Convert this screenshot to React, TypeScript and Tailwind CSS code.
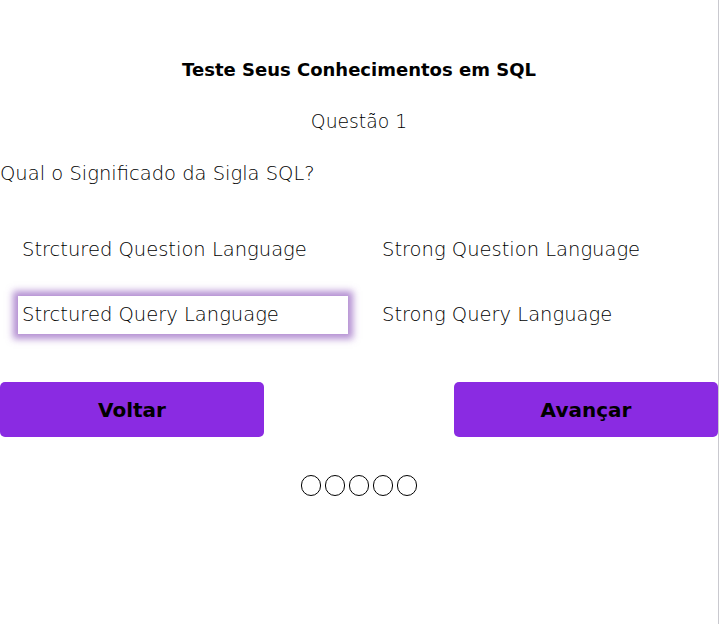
const options = [
  { label: "Strctured Question Language", selected: false },
  { label: "Strong Question Language", selected: false },
  { label: "Strctured Query Language", selected: true },
  { label: "Strong Query Language", selected: false },
];

export default function App() {
  return (
    <div className="flex w-[720px] h-[624px] bg-white text-black font-['DejaVu_Sans',sans-serif]">
      <main className="w-[718px] flex flex-col">
        <h1 className="pt-[56px] text-center text-[18px] leading-[27px] font-bold">
          Teste Seus Conhecimentos em SQL
        </h1>
        <p className="mt-[25px] text-center text-[18.8px] leading-[27px] font-extralight">Questão 1</p>
        <p className="mt-[25px] text-[19.5px] leading-[27px] font-extralight">Qual o Significado da Sigla SQL?</p>

        <div className="mt-[44px] ml-[18px] grid grid-cols-[330px_330px] gap-x-[30px] gap-y-[27px]">
          {options.map((o) => (
            <div
              key={o.label}
              className={
                o.selected
                  ? "h-[38px] flex items-center pl-[4px] bg-white shadow-[0_0_7px_5px_rgba(130,70,180,0.6)] text-[19.5px] font-extralight"
                  : "h-[38px] flex items-center pl-[4px] text-[19.5px] font-extralight"
              }
            >
              {o.label}
            </div>
          ))}
        </div>

        <div className="mt-[48px] flex justify-between">
          <button className="w-[264px] h-[55px] rounded-[5px] bg-[#8a2be2] text-[20px] font-bold">Voltar</button>
          <button className="w-[264px] h-[55px] rounded-[5px] bg-[#8a2be2] text-[20px] font-bold">Avançar</button>
        </div>

        <div className="mt-[38px] flex justify-center gap-[4px]">
          {[0, 1, 2, 3, 4].map((i) => (
            <span key={i} className="w-[20px] h-[21px] rounded-full border border-black" />
          ))}
        </div>
      </main>
      <div className="w-px h-full bg-[#c9c9cf]" />
    </div>
  );
}
